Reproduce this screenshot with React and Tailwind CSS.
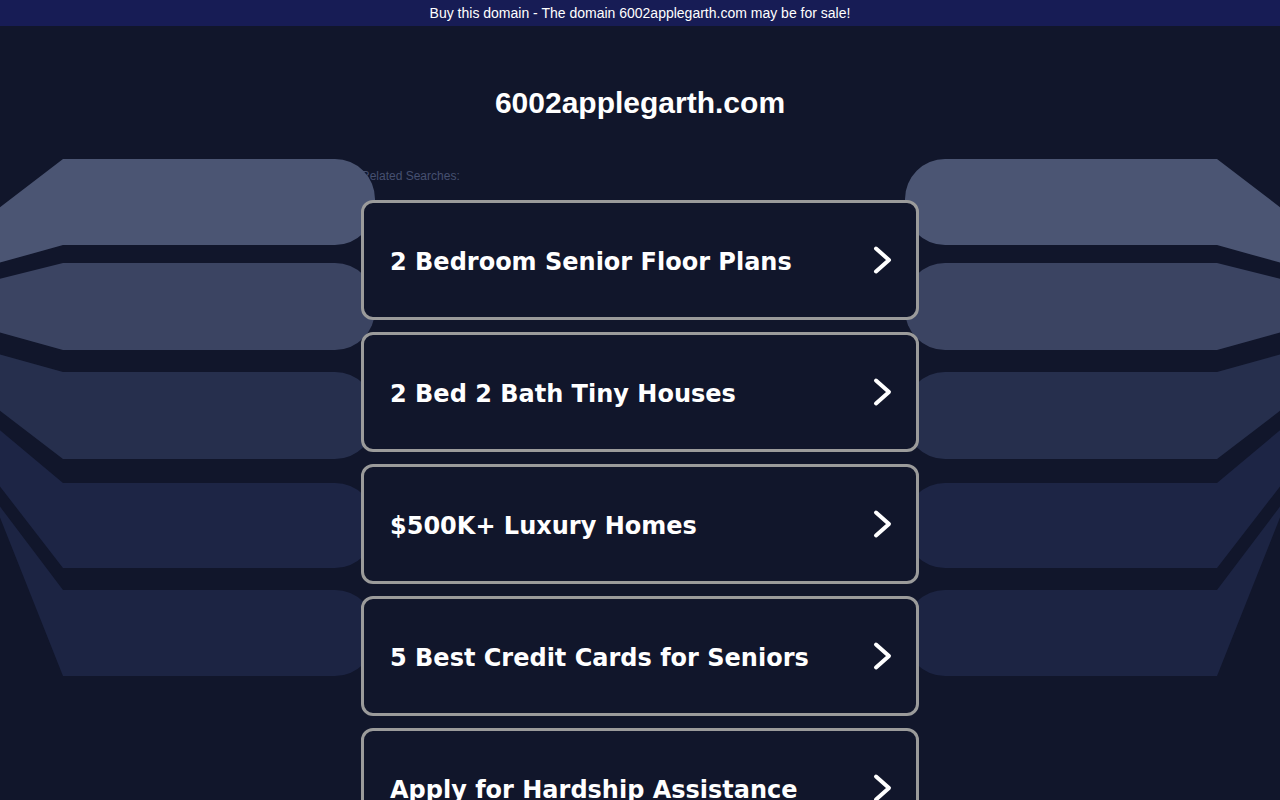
import React from 'react';

const searches = [
  '2 Bedroom Senior Floor Plans',
  '2 Bed 2 Bath Tiny Houses',
  '$500K+ Luxury Homes',
  '5 Best Credit Cards for Seniors',
  'Apply for Hardship Assistance',
];

// left-hand ribbons; the right side is the same group mirrored
const ribbons = [
  { d: 'M-5 211 L63 159 H335 A40 40 0 0 1 375 199 V205 A40 40 0 0 1 335 245 H63 L-5 264 Z', fill: '#4b5573' },
  { d: 'M-5 280 L63 263 H335 A40 40 0 0 1 375 303 V310 A40 40 0 0 1 335 350 H63 L-5 331 Z', fill: '#3b4462' },
  { d: 'M-5 353 L63 372 H335 A40 40 0 0 1 375 412 V419 A40 40 0 0 1 335 459 H63 L-5 407 Z', fill: '#262f4d' },
  { d: 'M-5 426 L63 483 H335 A40 40 0 0 1 375 523 V528 A40 40 0 0 1 335 568 H63 L-5 480 Z', fill: '#1d2545' },
  { d: 'M-5 500 L63 590 H335 A40 40 0 0 1 375 630 V636 A40 40 0 0 1 335 676 H63 L-5 505 Z', fill: '#1c2443' },
];

function Ribbons() {
  const group = ribbons.map((r, i) => <path key={i} d={r.d} fill={r.fill} />);
  return (
    <svg width="1280" height="800" viewBox="0 0 1280 800" className="block">
      <g>{group}</g>
      <g transform="translate(1280 0) scale(-1 1)">{group}</g>
    </svg>
  );
}

function Chevron() {
  return (
    <svg width="22" height="30" viewBox="0 0 22 30" className="shrink-0">
      <path d="M4 3.5 L17 15 L4 26.5" fill="none" stroke="#fff" strokeWidth="4" strokeLinecap="round" strokeLinejoin="round" />
    </svg>
  );
}

export default function App() {
  return (
    <div className="relative min-h-screen overflow-hidden bg-[#11162b] font-['Liberation_Sans',Arial,sans-serif]">
      <div className="relative z-30 flex h-[26px] items-center justify-center bg-[#171c55] text-[14px] text-white">
        Buy this domain - The domain 6002applegarth.com may be for sale!
      </div>

      <div className="pointer-events-none absolute left-1/2 top-0 z-10 -translate-x-1/2">
        <Ribbons />
      </div>

      <main className="relative mx-auto w-[558px] pb-10">
        <h1 className="mt-[60px] text-center text-[30px] font-bold leading-[34px] text-white">
          6002applegarth.com
        </h1>

        <p className="mt-[49px] text-[12px] leading-[14px] text-[#465070]">Related Searches:</p>

        <ul className="relative z-20 mt-[17px] flex flex-col gap-[12px]">
          {searches.map((s) => (
            <li key={s}>
              <a
                href="#"
                className="flex h-[120px] items-center justify-between rounded-[12px] border-[3px] border-[#9b9b9b] bg-[#11162b] pl-[26px] pr-[22px] font-['DejaVu_Sans',Verdana,sans-serif] text-[24px] font-bold text-white"
              >
                <span className="pt-[3px]">{s}</span>
                <Chevron />
              </a>
            </li>
          ))}
        </ul>
      </main>
    </div>
  );
}
